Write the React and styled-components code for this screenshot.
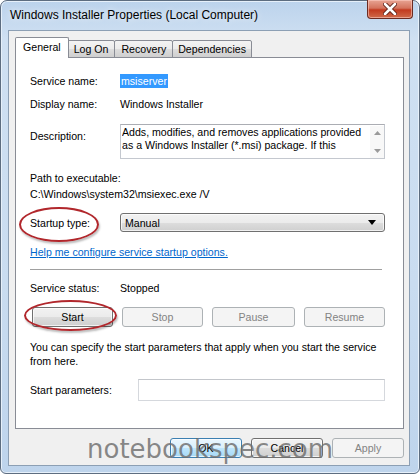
import React from 'react'
import styled, { createGlobalStyle, css } from 'styled-components'

const Global = createGlobalStyle`
  html, body {
    margin: 0;
    padding: 0;
    background: #ffffff;
  }
  body {
    font-family: 'Liberation Sans', Arial, sans-serif;
    font-size: 10.6px;
    color: #000;
  }
`

const Window = styled.div`
  width: 420px;
  height: 474px;
  box-sizing: border-box;
  display: flex;
  flex-direction: column;
  padding: 0 9px 7px 7px;
  background: linear-gradient(180deg, #bcd3ec 0%, #cfe0f2 8%, #c9dcf0 60%, #bed4ec 100%);
  border: 1px solid #5d6d80;
  border-radius: 7px 7px 6px 6px;
  box-shadow: inset 0 0 0 1px #e6f0fa;
`
const TitleBar = styled.div`
  height: 29px;
  flex: none;
  display: flex;
  justify-content: space-between;
  align-items: flex-start;
`
const Title = styled.div`
  font-size: 12px;
  line-height: 14px;
  padding: 7px 0 0 2px;
  text-shadow: 0 0 6px rgba(255, 255, 255, 0.9);
`
const CloseButton = styled.div`
  width: 44px;
  height: 18px;
  margin: -1px -3px 0 0;
  display: flex;
  align-items: center;
  justify-content: center;
  border: 1px solid #6b2b22;
  border-top: none;
  border-radius: 0 0 4px 4px;
  background: linear-gradient(180deg, #e8a493 0%, #d4735d 45%, #c23a1f 55%, #cf6a4a 100%);
  box-shadow: inset 0 0 0 1px rgba(255, 210, 200, 0.55);
`
const Client = styled.div`
  flex: 1;
  display: flex;
  flex-direction: column;
  background: #f0f0f0;
  border: 1px solid #8c9fb4;
  padding: 6px 5px 0 6px;
  white-space: nowrap;
`
const Tabs = styled.div`
  display: flex;
  align-items: flex-start;
  height: 21px;
  position: relative;
  z-index: 1;
  margin-bottom: -1px;
`
const Tab = styled.div`
  box-sizing: border-box;
  height: 18px;
  margin-top: 3px;
  padding: 0 ${p => p.$pad || 5}px;
  display: flex;
  align-items: center;
  border: 1px solid #898c95;
  margin-left: -1px;
  border-radius: 2px 2px 0 0;
  background: linear-gradient(180deg, #f3f3f3 0%, #ebebeb 50%, #dddddd 51%, #cfcfcf 100%);
  ${p =>
    p.$active &&
    css`
      height: 21px;
      margin-top: 0;
      margin-left: 0;
      margin-right: -1px;
      border-bottom: none;
      padding-bottom: 3px;
      background: #ffffff;
      position: relative;
      z-index: 2;
    `}
`
const Panel = styled.div`
  flex: none;
  height: 372px;
  box-sizing: border-box;
  background: #ffffff;
  border: 1px solid #898c95;
  padding: 16px 18px 0 14px;
  display: flex;
  flex-direction: column;
`
const Row = styled.div`
  display: flex;
  align-items: ${p => p.$align || 'center'};
  margin-top: ${p => p.$mt || 0}px;
  line-height: 14px;
  min-height: 14px;
`
const Label = styled.div`
  width: ${p => p.$w || 90}px;
  flex: none;
  padding-top: ${p => p.$pt || 0}px;
`
const Line = styled.div`
  margin-top: ${p => p.$mt || 0}px;
  line-height: 14px;
`
const Selected = styled.span`
  background: #3399ff;
  color: #ffffff;
  padding: 0 1px;
`
const Circled = styled.span`
  position: relative;
  &::after {
    content: '';
    position: absolute;
    left: ${p => p.$l}px;
    top: ${p => p.$t}px;
    width: ${p => p.$w}px;
    height: ${p => p.$h}px;
    border: 2px solid #b1272c;
    border-radius: 50%;
    box-shadow: 1px 2px 2px rgba(0, 0, 0, 0.25);
    pointer-events: none;
  }
`
const TextArea = styled.div`
  flex: 1;
  height: 35px;
  box-sizing: border-box;
  border: 1px solid #c4c8cf;
  border-top-color: #abadb3;
  display: flex;
  padding: 1px 0 0 1px;
`
const AreaText = styled.div`
  flex: 1;
  line-height: 13px;
  overflow: hidden;
`
const ScrollCol = styled.div`
  width: 14px;
  flex: none;
  display: flex;
  flex-direction: column;
  justify-content: space-between;
  align-items: center;
  padding: 5px 0 5px;
  background: #f8f8f8;
`
const Combo = styled.div`
  flex: 1;
  height: 19px;
  box-sizing: border-box;
  display: flex;
  align-items: center;
  justify-content: space-between;
  padding: 0 8px 0 4px;
  border: 1px solid #707070;
  border-radius: 3px;
  background: linear-gradient(180deg, #f2f2f2 0%, #ebebeb 50%, #dddddd 51%, #cfcfcf 100%);
  box-shadow: inset 0 0 0 1px rgba(255, 255, 255, 0.7);
`
const Link = styled.a`
  color: #0066cc;
  text-decoration: underline;
  line-height: 14px;
  margin-top: 13px;
  align-self: flex-start;
`
const Separator = styled.div`
  height: 1px;
  background: #a0a0a0;
  margin: 10px 3px 0 0;
`
const ButtonRow = styled.div`
  display: flex;
  gap: 9px;
  margin: 12px 0 0 2px;
`
const Button = styled.div`
  box-sizing: border-box;
  width: ${p => p.$w || 81}px;
  height: 20px;
  display: flex;
  align-items: center;
  justify-content: center;
  border-radius: 3px;
  border: 1px solid ${p => (p.$disabled ? '#adb2b5' : p.$default ? '#3c7fb1' : '#707070')};
  color: ${p => (p.$disabled ? '#838383' : '#000')};
  background: ${p =>
    p.$disabled
      ? '#f4f4f4'
      : p.$default
      ? 'linear-gradient(180deg, #eaf6fd 0%, #d9f0fc 50%, #bee6fd 51%, #a7d9f5 100%)'
      : 'linear-gradient(180deg, #f2f2f2 0%, #ebebeb 50%, #dddddd 51%, #cfcfcf 100%)'};
  box-shadow: ${p => (p.$disabled ? 'none' : 'inset 0 0 0 1px rgba(255,255,255,0.7)')};
`
const Note = styled.div`
  margin-top: 13px;
  line-height: 14px;
`
const Input = styled.div`
  flex: 1;
  height: 22px;
  box-sizing: border-box;
  border: 1px solid #d5d8dd;
  border-top-color: #c3c6cb;
`
const Footer = styled.div`
  display: flex;
  justify-content: flex-end;
  gap: 9px;
  margin-top: 9px;
  position: relative;
`
const Watermark = styled.div`
  position: absolute;
  left: 72px;
  top: -2px;
  font-family: 'DejaVu Sans', Verdana, sans-serif;
  font-size: 26px;
  line-height: 26px;
  color: rgba(110, 110, 110, 0.82);
  white-space: nowrap;
  pointer-events: none;
`

const Arrow = ({ up }) => (
  <svg width="7" height="4" viewBox="0 0 7 4">
    <path d={up ? 'M0 4 L3.5 0 L7 4 Z' : 'M0 0 L3.5 4 L7 0 Z'} fill="#9a9a9a" />
  </svg>
)

export default function App() {
  return (
    <>
      <Global />
      <Window>
        <TitleBar>
          <Title>Windows Installer Properties (Local Computer)</Title>
          <CloseButton>
            <svg width="14" height="12" viewBox="0 0 14 12">
              <path
                d="M2 1 L12 11 M12 1 L2 11"
                stroke="#5a1d14"
                strokeWidth="4.4"
                strokeLinecap="round"
              />
              <path
                d="M2 1 L12 11 M12 1 L2 11"
                stroke="#ffffff"
                strokeWidth="2.6"
                strokeLinecap="round"
              />
            </svg>
          </CloseButton>
        </TitleBar>

        <Client>
          <Tabs>
            <Tab $active $pad={7}>General</Tab>
            <Tab $pad={6}>Log On</Tab>
            <Tab $pad={6}>Recovery</Tab>
            <Tab $pad={5}>Dependencies</Tab>
          </Tabs>

          <Panel>
            <Row>
              <Label>Service name:</Label>
              <Selected>msiserver</Selected>
            </Row>
            <Row $mt={9}>
              <Label>Display name:</Label>
              <span>Windows Installer</span>
            </Row>
            <Row $mt={13} $align="flex-start">
              <Label $pt={5}>Description:</Label>
              <TextArea>
                <AreaText>
                  Adds, modifies, and removes applications provided
                  <br />
                  as a Windows Installer (*.msi) package. If this
                </AreaText>
                <ScrollCol>
                  <Arrow up />
                  <Arrow />
                </ScrollCol>
              </TextArea>
            </Row>
            <Line $mt={12}>Path to executable:</Line>
            <Line $mt={2}>C:\Windows\system32\msiexec.exe /V</Line>
            <Row $mt={12}>
              <Label>
                <Circled $l={-11} $t={-10} $w={76} $h={31}>Startup type:</Circled>
              </Label>
              <Combo>
                <span>Manual</span>
                <svg width="8" height="5" viewBox="0 0 8 5">
                  <path d="M0 0 L8 0 L4 5 Z" fill="#000" />
                </svg>
              </Combo>
            </Row>
            <Link>Help me configure service startup options.</Link>
            <Separator />
            <Row $mt={11}>
              <Label>Service status:</Label>
              <span>Stopped</span>
            </Row>
            <ButtonRow>
              <Circled $l={-8} $t={-7} $w={89} $h={27}>
                <Button>Start</Button>
              </Circled>
              <Button $disabled>Stop</Button>
              <Button $disabled $w={83}>Pause</Button>
              <Button $disabled>Resume</Button>
            </ButtonRow>
            <Note>
              You can specify the start parameters that apply when you start the service
              <br />
              from here.
            </Note>
            <Row $mt={11}>
              <Label $w={108}>Start parameters:</Label>
              <Input />
            </Row>
          </Panel>

          <Footer>
            <Button $default $w={72}>OK</Button>
            <Button $w={72}>Cancel</Button>
            <Button $disabled $w={72}>Apply</Button>
            <Watermark>notebookspec.com</Watermark>
          </Footer>
        </Client>
      </Window>
    </>
  )
}
